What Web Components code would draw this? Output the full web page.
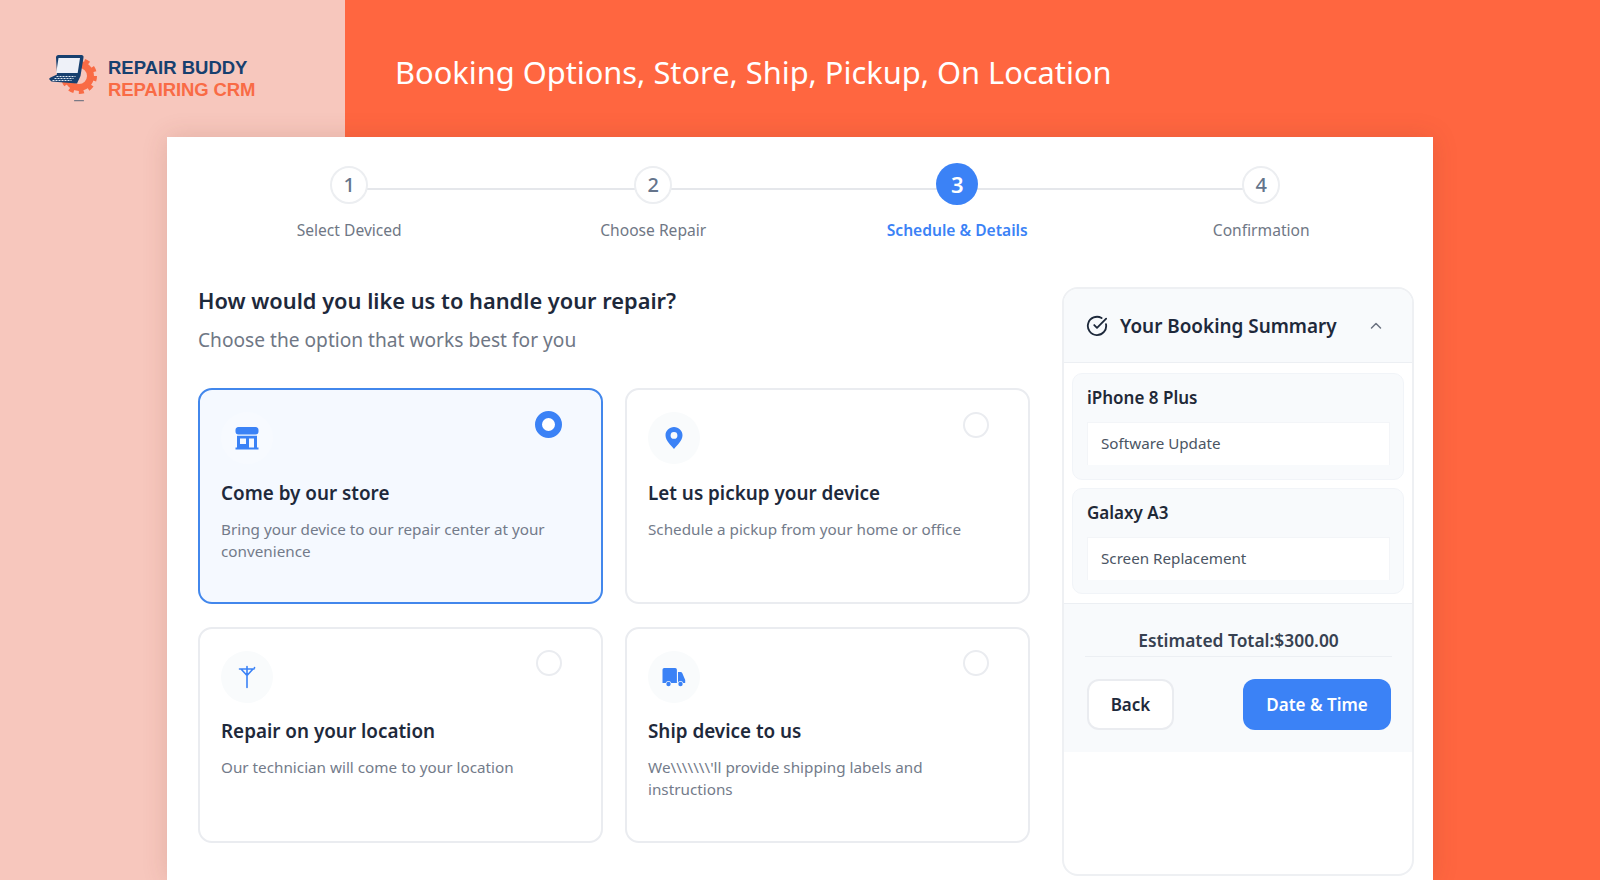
<!DOCTYPE html>
<html lang="en"><head><meta charset="utf-8"><title>Booking options</title>
<style>html,body{margin:0;padding:0;height:880px;overflow:hidden;font-family:"Noto Sans","Liberation Sans",sans-serif}</style>
</head><body>
<rb-app>
  <rb-banner slot="banner" heading="Booking Options, Store, Ship, Pickup, On Location"></rb-banner>
  <rb-stepper>
    <rb-step num="1" label="Select Deviced"></rb-step>
    <rb-step num="2" label="Choose Repair"></rb-step>
    <rb-step num="3" label="Schedule &amp; Details" active></rb-step>
    <rb-step num="4" label="Confirmation" last></rb-step>
  </rb-stepper>
  <rb-options slot="options" heading="How would you like us to handle your repair?" sub="Choose the option that works best for you">
    <rb-option selected title="Come by our store" desc="Bring your device to our repair center at your convenience">
      <svg slot="icon" width="24" height="24" viewBox="0 0 24 24" fill="#3b82f6" fill-rule="evenodd"><path d="M3.500 1h17A3.200 3.200 0 0 1 23.500 4.200V5.500a3 3 0 0 1-3 3H3.500a3 3 0 0 1-3-3V4.200A3.200 3.200 0 0 1 3.500 1z"/><path d="M2 9.800h20V21.500h1.500v2H.5v-2H2zM5 12.500v5.500h6v-5.500zM14 12.500V21.500h5v-9z"/></svg>
    </rb-option>
    <rb-option title="Let us pickup your device" desc="Schedule a pickup from your home or office">
      <svg slot="icon" width="24" height="24" viewBox="0 0 24 24" fill="#3b82f6" fill-rule="evenodd"><path d="M12 1c4.700 0 8.500 3.700 8.500 8.300 0 5.400-5.500 10-8.500 13.700C9 19.300 3.500 14.700 3.500 9.300 3.500 4.700 7.300 1 12 1zm0 5a3.400 3.400 0 1 0 0 6.800A3.400 3.400 0 0 0 12 6z"/></svg>
    </rb-option>
    <rb-option title="Repair on your location" desc="Our technician will come to your location">
      <svg slot="icon" width="24" height="24" viewBox="0 0 24 24" fill="none" stroke="#3b82f6" stroke-width="1.600" stroke-linecap="round" stroke-linejoin="round"><path d="M12 1.500v21M4.500 4h14.500M19.500 2.500v.5M18 4l-6 6.500L6 4"/></svg>
    </rb-option>
    <rb-option title="Ship device to us" desc="We\\\\\\\'ll provide shipping labels and instructions">
      <svg slot="icon" width="24" height="24" viewBox="0 0 24 24" fill="#3b82f6" fill-rule="evenodd"><path d="M2.200 3h11a1.700 1.700 0 0 1 1.700 1.700V18H9.300a3 3 0 0 0-5.600 0H.5V4.700A1.700 1.700 0 0 1 2.200 3z"/><path d="M16 7h2.600c.7 0 1.300.4 1.600 1l3 7v3h-1.900a3 3 0 0 0-5.600 0H16z"/><circle cx="6.500" cy="19" r="2.200"/><circle cx="18.500" cy="19" r="2.200"/></svg>
    </rb-option>
  </rb-options>
  <rb-summary slot="summary" heading="Your Booking Summary" total="Estimated Total:$300.00">
    <rb-item device="iPhone 8 Plus" service="Software Update"></rb-item>
    <rb-item device="Galaxy A3" service="Screen Replacement"></rb-item>
  </rb-summary>
</rb-app>
<template id="t-app">
  <style>
    :host{display:block;height:880px;background:linear-gradient(90deg,#f7c7bd 0,#f7c7bd 345px,#ff6640 345px,#ff6640 100%);overflow:hidden}
    .card{box-sizing:border-box;margin-left:167px;width:1266px;height:743px;background:#fff;padding:0 19px 0 31px;box-shadow:0 0 24px rgba(120,50,30,.16)}
    .main{display:grid;grid-template-columns:833px 352px;column-gap:31px;margin-top:46px}
  </style>
  <slot name="banner"></slot>
  <div class="card">
    <slot></slot>
    <div class="main"><slot name="options"></slot><slot name="summary"></slot></div>
  </div>
</template>
<template id="t-banner">
  <style>
    :host{display:flex;height:137px}
    .brand{width:345px;box-sizing:border-box;padding:20px 0 0 40px;display:flex;align-items:center;gap:4px}
    .brand svg{margin-top:-9px}
    .words{font:700 18.500px/21.500px "Liberation Sans",sans-serif;color:#17406f;white-space:nowrap}
    .words .b{color:#f96b45;letter-spacing:-.1px}
    h1{margin:0;padding:6px 0 0 50px;align-self:center;font:400 30.800px/44px "Noto Sans",sans-serif;color:#fff;white-space:nowrap}
  </style>
  <div class="brand">
    <svg width="64" height="60" viewBox="0 0 64 60" aria-hidden="true">
      <circle cx="39" cy="32" r="11.500" fill="none" stroke="#f96b45" stroke-width="7"/>
      <circle cx="39" cy="32" r="15.500" fill="none" stroke="#f96b45" stroke-width="5" stroke-dasharray="4.870 4.870"/>
      <path d="M16 13.500a2.500 2.500 0 0 1 2.500-2.500h23a2 2 0 0 1 2 2.500L40.500 32l-3.500 7.500-25.500-2-2.500-2.500 1-1.300 7-3.200z" fill="#17406f"/>
      <path d="M18.500 14h21.500l-2.300 15h-21.500z" fill="#eef1f8"/>
      <path d="M16.500 32.500h19M14.500 34.500h19M12.500 36.500h19" stroke="#dfe7f1" stroke-width="1.100" stroke-dasharray="2 1"/>
      <rect x="34" y="56" width="10" height="1.300" rx=".6" fill="#7a7a86"/>
    </svg>
    <div class="words">REPAIR BUDDY<br><span class="b">REPAIRING CRM</span></div>
  </div>
  <h1></h1>
</template>
<template id="t-stepper">
  <style>:host{display:grid;grid-template-columns:repeat(4,304px);padding-top:26px;margin-left:-.800px}</style>
  <slot></slot>
</template>
<template id="t-step">
  <style>
    :host{display:flex;flex-direction:column;align-items:center;position:relative}
    .dot{position:relative;z-index:1;height:42px;display:flex;align-items:center}
    .c{box-sizing:border-box;width:38px;height:38px;border-radius:50%;border:2px solid #eceef1;background:#fff;color:#64748b;display:flex;align-items:center;justify-content:center;font-size:20px;font-weight:500;margin-top:1px}
    .l{margin-top:14px;font-size:15.600px;line-height:22px;color:#6f7785;white-space:nowrap}
    .line{position:absolute;left:50%;width:100%;top:25px;height:2px;background:#e5e7eb}
    :host([last]) .line{display:none}
    :host([active]) .c{width:42px;height:42px;border:0;background:#3b82f6;color:#fff;font-weight:600;font-size:22px;margin-top:0}
    :host([active]) .l{color:#3b82f6;font-weight:600}
  </style>
  <div class="line"></div>
  <div class="dot"><div class="c"></div></div>
  <div class="l"></div>
</template>
<template id="t-options">
  <style>
    :host{display:block}
    h2{margin:0;font:600 21.800px/28px "Noto Sans",sans-serif;color:#1e293b;white-space:nowrap}
    p{margin:12px 0 35px;font-size:19.150px;line-height:26px;color:#6f7785;white-space:nowrap}
    .g{display:grid;grid-template-columns:405px 405px;grid-auto-rows:216px;gap:22.500px 22px}
  </style>
  <h2></h2><p></p><div class="g"><slot></slot></div>
</template>
<template id="t-option">
  <style>
    :host{display:block;position:relative;box-sizing:border-box;border:2px solid #eaecf0;border-radius:14px;background:#fff;padding:22px 21px 0}
    :host([selected]){border-color:#4287ec;background:#f5f9ff}
    .ic{width:52px;height:52px;border-radius:50%;background:#f9fbfc;display:flex;align-items:center;justify-content:center}
    :host([selected]) .ic{background:#f7faff}
    h3{margin:14.500px 0 0;font:600 18.850px/28px "Noto Sans",sans-serif;color:#1e293b;white-space:nowrap}
    p{margin:11px 0 0;font-size:15.250px;line-height:22.400px;color:#737b8a}
    .r{position:absolute;top:21.500px;right:39px;box-sizing:border-box;width:26px;height:26px;border-radius:50%;border:2px solid #eaecf0;background:#fff}
    :host([selected]) .r{width:27px;height:27px;border:7.500px solid #3b82f6;top:21px}
  </style>
  <div class="ic"><slot name="icon"></slot></div>
  <h3></h3><p></p>
  <div class="r"></div>
</template>
<template id="t-summary">
  <style>
    :host{display:block;box-sizing:border-box;height:589px;border:2px solid #eef0f3;border-radius:16px;overflow:hidden;background:#fff}
    .top{box-sizing:border-box;height:74px;background:#f8fafc;border-bottom:1px solid #eceff3;display:flex;align-items:center;padding:0 0 0 22px;gap:12px}
    .top h2{margin:0;font:600 18.900px/28px "Noto Sans",sans-serif;color:#1e293b;white-space:nowrap;flex:0 0 216px}
    .chev{margin-left:20px}
    .list{padding:10px 8px 9px 8px;display:flex;flex-direction:column;gap:8px}
    .foot{background:#f8fafc;border-top:1px solid #eceff3;height:149px;box-sizing:border-box;padding:24px 21px 0 23px}
    .tot{margin:0 -1px 0 -2px;text-align:center;font-size:17.400px;font-weight:600;line-height:24px;padding-bottom:3.500px;border-bottom:1px solid #eceff3;color:#374151;white-space:nowrap}
    .btns{display:flex;justify-content:space-between;margin-top:22px}
    button{box-sizing:border-box;height:51px;border-radius:12px;font:600 17px "Noto Sans",sans-serif;cursor:pointer}
    .b{width:87px;background:#fff;border:2px solid #eaecf0;color:#1e293b}
    .n{width:148px;background:#3b82f6;border:0;color:#fff}
  </style>
  <div class="top">
    <svg width="22" height="22" viewBox="0 0 24 24" fill="none" stroke="#1e293b" stroke-width="2" stroke-linecap="round" stroke-linejoin="round"><path d="M21.800 10A10 10 0 1 1 17 3.300"/><path d="m9 11 3 3L22 4"/></svg>
    <h2></h2>
    <svg class="chev" width="14" height="14" viewBox="0 0 14 14" fill="none" stroke="#6b7280" stroke-width="1.500" stroke-linecap="round" stroke-linejoin="round"><path d="M2.500 9 7 4.500 11.500 9"/></svg>
  </div>
  <div class="list"><slot></slot></div>
  <div class="foot">
    <div class="tot"></div>
    <div class="btns"><button class="b">Back</button><button class="n">Date &amp; Time</button></div>
  </div>
</template>
<template id="t-item">
  <style>
    :host{display:block;box-sizing:border-box;height:106.500px;background:#f8fafc;border:1px solid #f1f4f8;border-radius:10px;padding:11px 13px 0 14px}
    .d{font:600 17px/26px "Noto Sans",sans-serif;color:#1f2937;white-space:nowrap}
    .s{margin-top:11px;height:43px;box-sizing:border-box;background:#fff;border:1px solid #f3f5f8;border-bottom:0;padding:0 13px;font-size:15.200px;line-height:40px;color:#4b5563;white-space:nowrap}
  </style>
  <div class="d"></div><div class="s"></div>
</template>
<script>
function base(id,fill){return class extends HTMLElement{constructor(){super();this.attachShadow({mode:'open'}).appendChild(document.getElementById(id).content.cloneNode(true));}connectedCallback(){if(fill)fill.call(this,this.shadowRoot,n=>this.getAttribute(n));}}}
customElements.define('rb-app',base('t-app'));
customElements.define('rb-banner',base('t-banner',(r,a)=>{r.querySelector('h1').textContent=a('heading')}));
customElements.define('rb-stepper',base('t-stepper'));
customElements.define('rb-step',base('t-step',(r,a)=>{r.querySelector('.c').textContent=a('num');r.querySelector('.l').textContent=a('label')}));
customElements.define('rb-options',base('t-options',(r,a)=>{r.querySelector('h2').textContent=a('heading');r.querySelector('p').textContent=a('sub')}));
customElements.define('rb-option',base('t-option',(r,a)=>{r.querySelector('h3').textContent=a('title');r.querySelector('p').textContent=a('desc')}));
customElements.define('rb-summary',base('t-summary',(r,a)=>{r.querySelector('h2').textContent=a('heading');r.querySelector('.tot').textContent=a('total')}));
customElements.define('rb-item',base('t-item',(r,a)=>{r.querySelector('.d').textContent=a('device');r.querySelector('.s').textContent=a('service')}));
</script>
</body></html>
